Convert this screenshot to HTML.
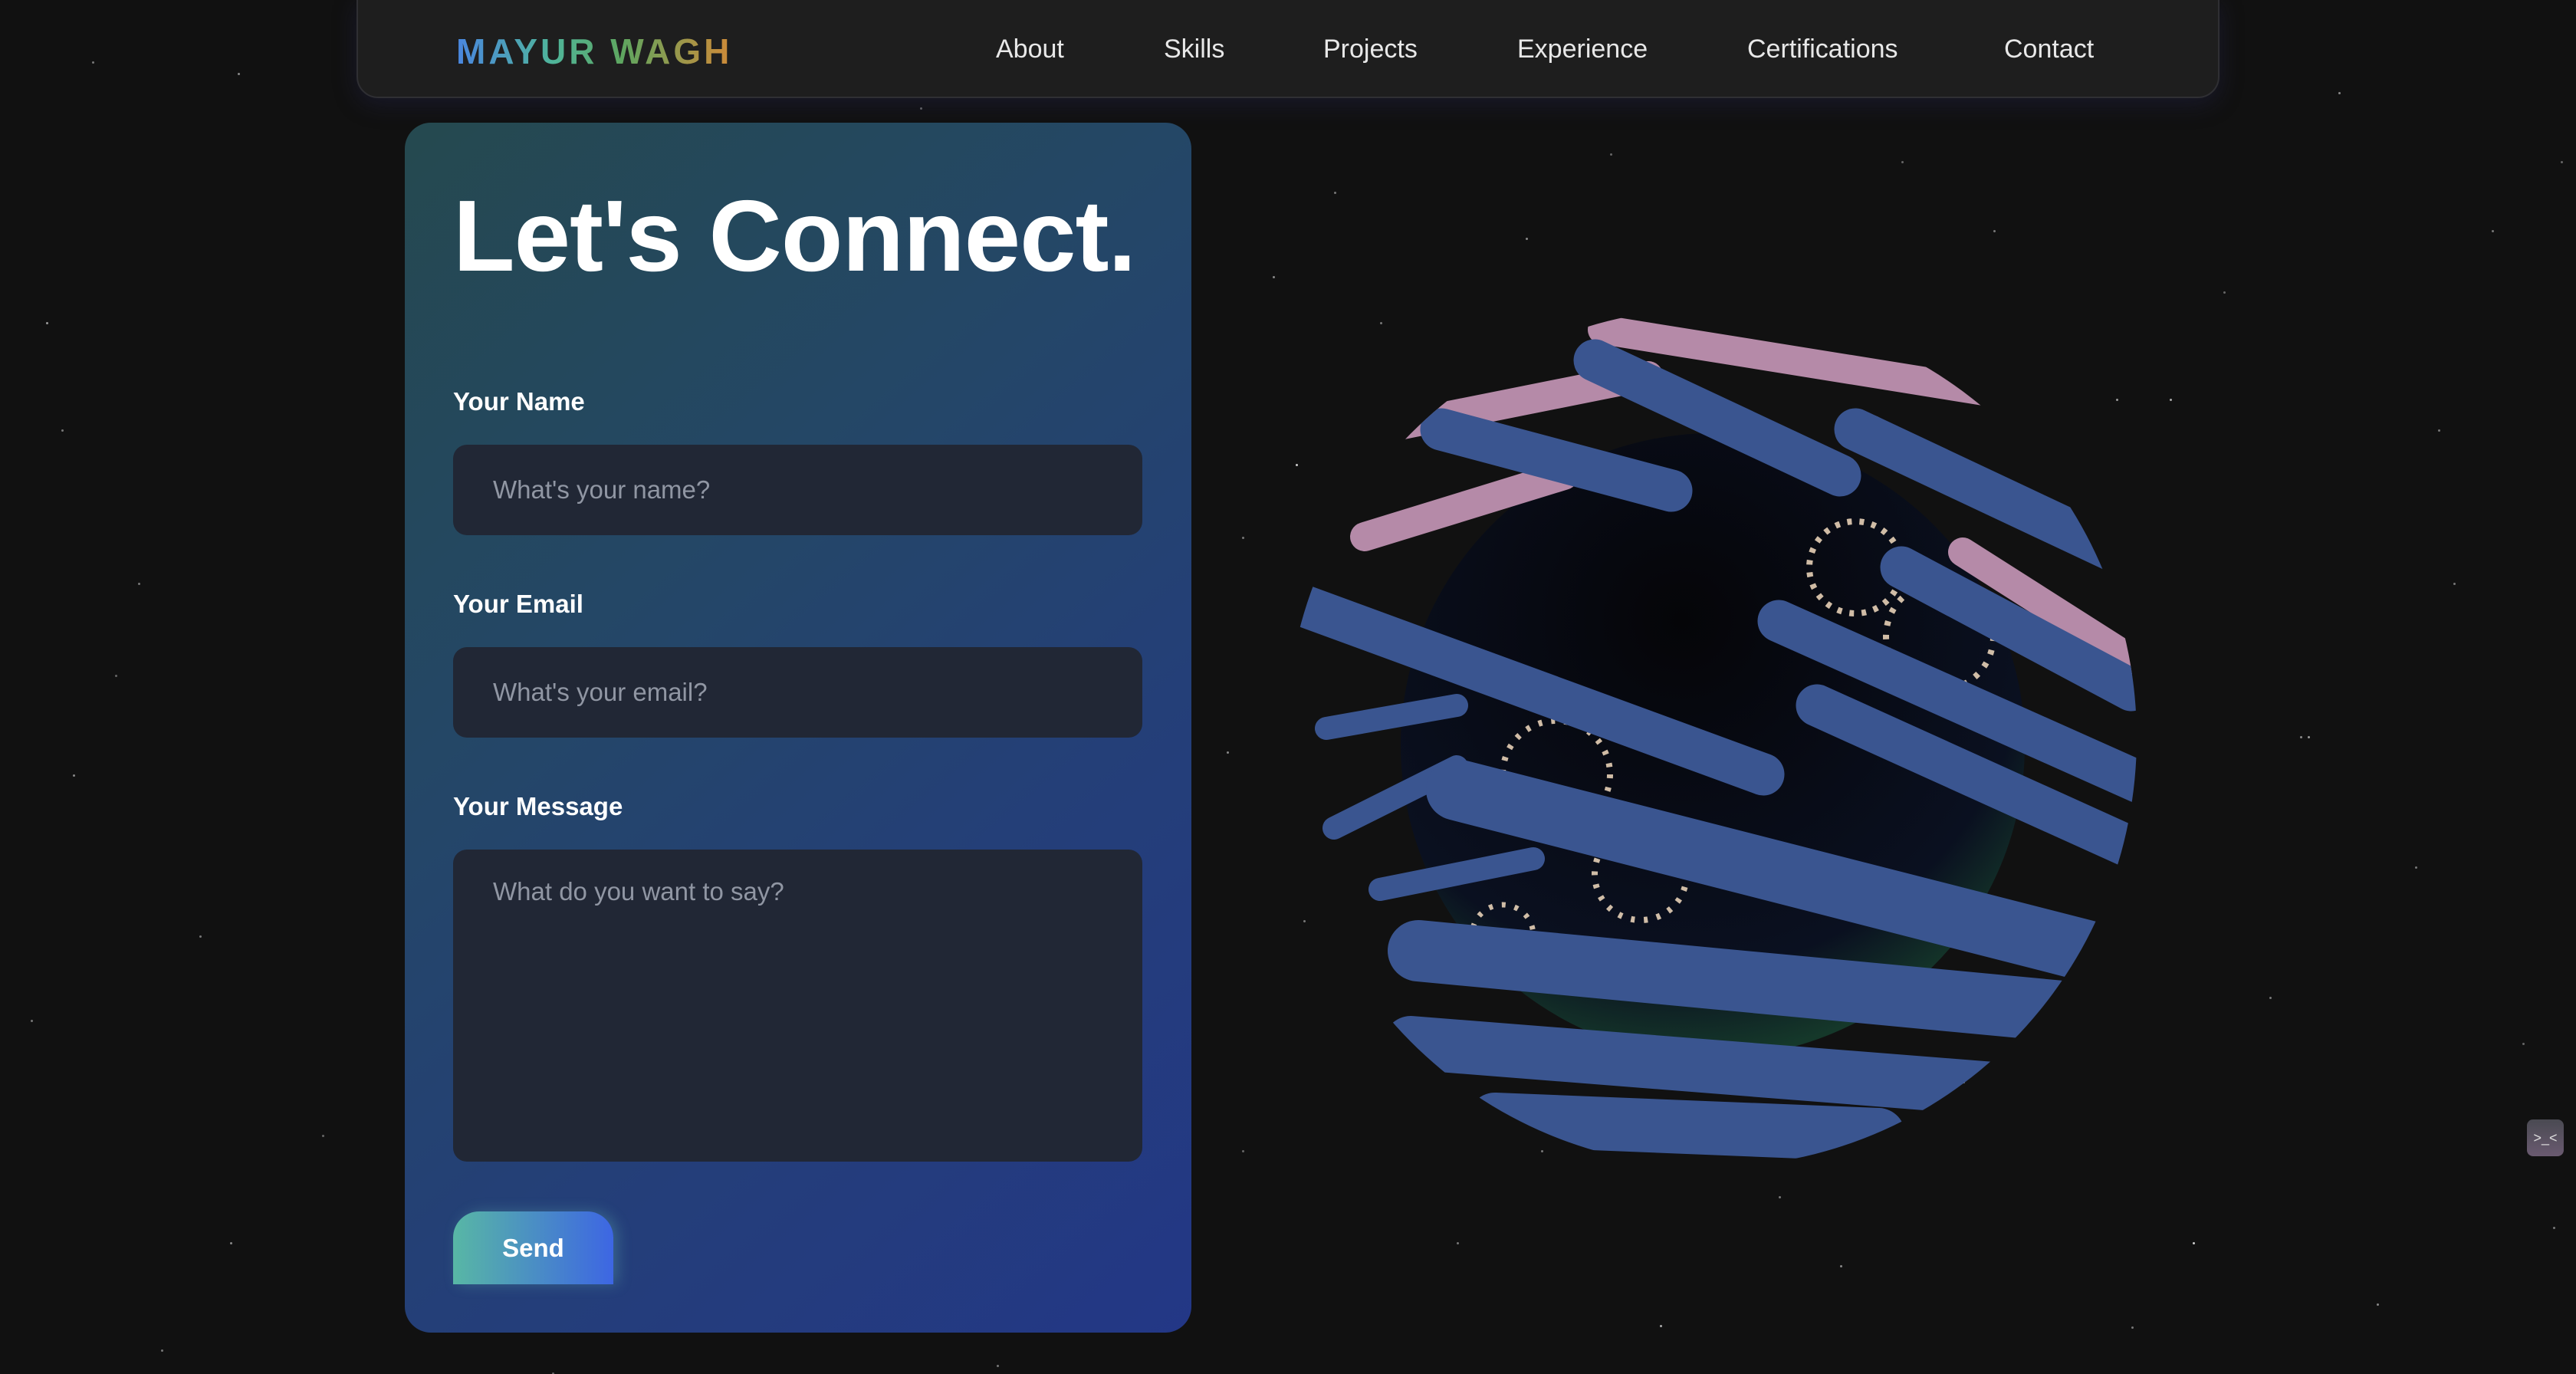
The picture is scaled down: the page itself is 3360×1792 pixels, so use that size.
<!DOCTYPE html>
<html><head><meta charset="utf-8"><style>
*{margin:0;padding:0;box-sizing:border-box}
body{width:3360px;height:1792px;background:#111111;overflow:hidden;position:relative;font-family:"Liberation Sans",sans-serif;}
.stars{position:absolute;left:0;top:0;width:3px;height:3px;border-radius:50%;background:transparent;
box-shadow:120px 80px #777,310px 95px #888,1200px 140px #666,2200px 40px #777,3050px 120px #888,3250px 300px #777,60px 420px #999,180px 760px #777,95px 1010px #888,40px 1330px #777,300px 1620px #888,210px 1760px #777,420px 1480px #666,1740px 250px #777,1990px 310px #888,2480px 210px #666,2760px 520px #999,2830px 520px #aaa,3000px 960px #888,3010px 960px #999,3150px 1130px #777,3290px 1360px #666,2860px 1620px #ccc,2780px 1730px #777,2400px 1650px #888,2165px 1728px #aaa,1900px 1620px #777,1620px 1500px #666,1700px 1200px #777,1600px 980px #888,2960px 1300px #777,3200px 760px #777,2690px 700px #888,1690px 605px #ccc,1800px 420px #777,2100px 200px #666,2600px 300px #777,720px 1790px #666,1300px 1780px #777,3100px 1700px #888,3330px 1600px #777,2900px 380px #666,3180px 560px #777,80px 560px #777,260px 1220px #777,150px 880px #666,1620px 700px #777,1660px 360px #888,2320px 1560px #777,3340px 210px #666,2010px 1500px #777,2560px 1410px #888;}
.nav{position:absolute;left:465px;top:-2px;width:2430px;height:130px;background:#1e1e1e;border:2px solid #2f2f33;border-radius:0 0 28px 28px;box-shadow:0 8px 30px rgba(40,40,90,.35);}
.logo{position:absolute;left:128px;top:40px;font-size:46px;font-weight:bold;letter-spacing:4px;background:linear-gradient(90deg,#4a86e0,#4fb59a 35%,#5ea660 60%,#d08a38);-webkit-background-clip:text;background-clip:text;color:transparent;}
.nav a{position:absolute;top:45px;font-size:34px;color:#e8e8e8;text-decoration:none;}
.card{position:absolute;left:528px;top:160px;width:1026px;height:1578px;border-radius:34px;background:linear-gradient(140deg,#25494f 0%,#244766 35%,#243f78 65%,#233786 100%);}
h1{position:absolute;left:63px;top:72px;font-size:132px;font-weight:900;color:#fff;letter-spacing:-1px;white-space:nowrap;}
.lbl{position:absolute;left:63px;font-size:33px;color:#fff;font-weight:bold;}
.inp{position:absolute;left:63px;width:899px;background:#212735;border-radius:18px;color:#9096a3;font-size:33px;padding-left:52px;}
.send{position:absolute;left:63px;top:1420px;width:209px;height:95px;border-radius:34px 34px 0 0;background:linear-gradient(90deg,#58b7a5,#3d66e3);color:#fff;font-weight:bold;font-size:33px;text-align:center;line-height:95px;box-shadow:6px 0 18px rgba(120,220,200,.25);}
.icon{position:absolute;left:3296px;top:1460px;width:48px;height:48px;border-radius:8px;background:linear-gradient(#4a4a52,#6a5a70);color:#ddd;font-size:18px;text-align:center;line-height:48px;}
</style></head><body>
<div class="stars"></div>
<div class="nav">
<div class="logo">MAYUR WAGH</div>
<a style="left:832px">About</a><a style="left:1051px">Skills</a><a style="left:1259px">Projects</a><a style="left:1512px">Experience</a><a style="left:1812px">Certifications</a><a style="left:2147px">Contact</a>
</div>
<div class="card">
<h1>Let's Connect.</h1>
<div class="lbl" style="top:345px">Your Name</div>
<div class="inp" style="top:420px;height:118px;line-height:118px">What's your name?</div>
<div class="lbl" style="top:609px">Your Email</div>
<div class="inp" style="top:684px;height:118px;line-height:118px">What's your email?</div>
<div class="lbl" style="top:873px">Your Message</div>
<div class="inp" style="top:948px;height:407px;padding-top:36px">What do you want to say?</div>
<div class="send">Send</div>
</div>
<svg style="position:absolute;left:0;top:0" width="3360" height="1792">
<defs>
<clipPath id="c"><ellipse cx="2232" cy="962" rx="555" ry="560"/></clipPath>
<radialGradient id="g" cx="0.45" cy="0.3" r="0.7"><stop offset="0" stop-color="#050508"/><stop offset="0.8" stop-color="#0a1020"/><stop offset="1" stop-color="#15382a"/></radialGradient>
</defs>
<circle cx="2234" cy="972" r="407" fill="url(#g)"/>
<g fill="#f3dcc0" opacity="0.85">
<circle cx="2420" cy="740" r="60" fill="none" stroke="#f3dcc0" stroke-width="8" stroke-dasharray="6 10"/>
<circle cx="2530" cy="830" r="70" fill="none" stroke="#f3dcc0" stroke-width="8" stroke-dasharray="6 12"/>
<circle cx="2030" cy="1010" r="70" fill="none" stroke="#f3dcc0" stroke-width="8" stroke-dasharray="5 12"/>
<circle cx="2140" cy="1140" r="60" fill="none" stroke="#f3dcc0" stroke-width="8" stroke-dasharray="5 12"/>
<circle cx="1960" cy="1220" r="40" fill="none" stroke="#f3dcc0" stroke-width="7" stroke-dasharray="5 12"/>
</g>
<g clip-path="url(#c)" stroke-linecap="round" fill="none">
<g stroke="#b58aa8" stroke-width="38">
<line x1="2090" y1="430" x2="2650" y2="520"/>
<line x1="1800" y1="560" x2="2150" y2="490"/>
<line x1="1780" y1="700" x2="2040" y2="620"/>
<line x1="2440" y1="560" x2="2700" y2="700"/>
<line x1="2560" y1="720" x2="2780" y2="860"/>
</g>
<g stroke="#3a5590" stroke-width="55">
<line x1="2080" y1="470" x2="2400" y2="620"/>
<line x1="1880" y1="560" x2="2180" y2="640"/>
<line x1="2420" y1="560" x2="2760" y2="720"/>
<line x1="2480" y1="740" x2="2780" y2="900"/>
<line x1="1700" y1="790" x2="2300" y2="1010"/>
<line x1="2320" y1="810" x2="2790" y2="1020"/>
<line x1="2370" y1="920" x2="2790" y2="1110"/>
<line x1="1730" y1="950" x2="1900" y2="920" stroke-width="30"/>
<line x1="1740" y1="1080" x2="1900" y2="1000" stroke-width="30"/>
<line x1="1900" y1="1030" x2="2800" y2="1260" stroke-width="80"/>
<line x1="1800" y1="1160" x2="2000" y2="1120" stroke-width="30"/>
<line x1="1850" y1="1240" x2="2700" y2="1320" stroke-width="80"/>
<line x1="1840" y1="1360" x2="2600" y2="1420" stroke-width="70"/>
<line x1="1950" y1="1460" x2="2450" y2="1480" stroke-width="70"/>
</g>
</g>
</svg>
<div class="icon">&gt;_&lt;</div>
</body></html>
